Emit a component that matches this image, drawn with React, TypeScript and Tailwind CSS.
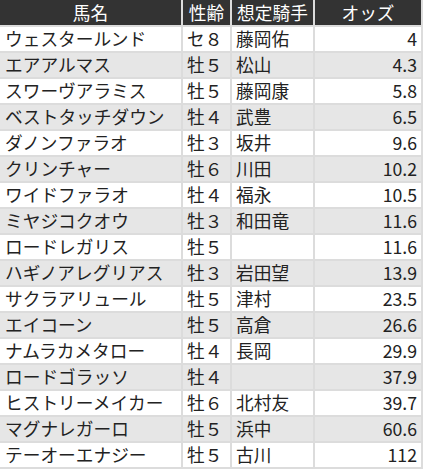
const rows: [string, string, string, string][] = [
  ["ウェスタールンド", "セ８", "藤岡佑", "4"],
  ["エアアルマス", "牡５", "松山", "4.3"],
  ["スワーヴアラミス", "牡５", "藤岡康", "5.8"],
  ["ベストタッチダウン", "牡４", "武豊", "6.5"],
  ["ダノンファラオ", "牡３", "坂井", "9.6"],
  ["クリンチャー", "牡６", "川田", "10.2"],
  ["ワイドファラオ", "牡４", "福永", "10.5"],
  ["ミヤジコクオウ", "牡３", "和田竜", "11.6"],
  ["ロードレガリス", "牡５", "", "11.6"],
  ["ハギノアレグリアス", "牡３", "岩田望", "13.9"],
  ["サクラアリュール", "牡５", "津村", "23.5"],
  ["エイコーン", "牡５", "高倉", "26.6"],
  ["ナムラカメタロー", "牡４", "長岡", "29.9"],
  ["ロードゴラッソ", "牡４", "", "37.9"],
  ["ヒストリーメイカー", "牡６", "北村友", "39.7"],
  ["マグナレガーロ", "牡５", "浜中", "60.6"],
  ["テーオーエナジー", "牡５", "古川", "112"],
];

const headers = ["馬名", "性齢", "想定騎手", "オッズ"];

export default function App() {
  return (
    <div className="w-[423px] h-[469px] bg-[#dcdcdc] overflow-hidden">
      <div
        className="grid grid-cols-[181px_47px_81px_106px] gap-[2px] text-[17.7px] leading-none text-[#222]"
        style={{ fontFamily: '"Noto Sans CJK JP", "Noto Sans", sans-serif' }}
      >
        {headers.map((h) => (
          <div
            key={h}
            className="h-[25px] bg-[#333333] text-white flex items-center justify-center"
          >
            {h}
          </div>
        ))}
        {rows.map((r, i) => {
          const bg = i % 2 === 0 ? "bg-white" : "bg-[#e6e6e6]";
          return [
            <div key={i + "a"} className={`h-[24px] ${bg} flex items-center pl-[5px]`}>
              {r[0]}
            </div>,
            <div key={i + "b"} className={`h-[24px] ${bg} flex items-center pl-[4px]`}>
              {r[1]}
            </div>,
            <div key={i + "c"} className={`h-[24px] ${bg} flex items-center pl-[4px]`}>
              {r[2]}
            </div>,
            <div key={i + "d"} className={`h-[24px] ${bg} flex items-center justify-end pr-[4px]`}>
              {r[3]}
            </div>,
          ];
        })}
      </div>
    </div>
  );
}
